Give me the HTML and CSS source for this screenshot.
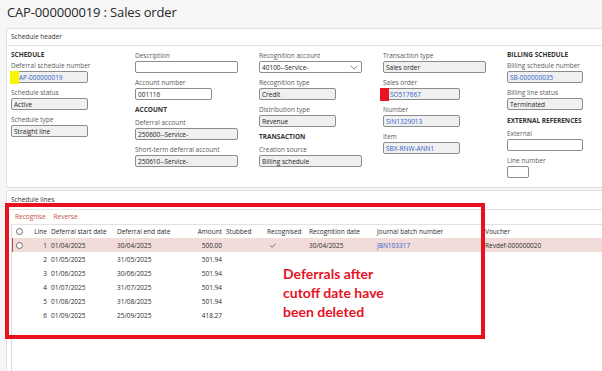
FILE: index.html
```html
<!DOCTYPE html>
<html lang="en">
<head>
<meta charset="utf-8">
<title>CAP-000000019 : Sales order</title>
<link rel="stylesheet" href="styles.css">
</head>
<body>
<div class="page">
  <h1 class="title">CAP-000000019 : Sales order</h1>

  <section class="card header-card">
    <div class="card-head">Schedule header</div>
    <div class="form-grid">
      <div class="col">
        <div class="group-title first">SCHEDULE</div>
        <div class="field"><div class="label">Deferral schedule number</div><div class="input ro w77 link"><span class="mark-yellow">C</span>AP-000000019</div></div>
        <div class="field"><div class="label">Schedule status</div><div class="input ro w77">Active</div></div>
        <div class="field"><div class="label">Schedule type</div><div class="input ro w77">Straight line</div></div>
      </div>

      <div class="col plain">
        <div class="field"><div class="label">Description</div><div class="input w103"></div></div>
        <div class="field"><div class="label">Account number</div><div class="input w77">001116</div></div>
        <div class="group-title">ACCOUNT</div>
        <div class="field"><div class="label">Deferral account</div><div class="input ro w103">250600--Service-</div></div>
        <div class="field"><div class="label">Short-term deferral account</div><div class="input ro w103">250610--Service-</div></div>
      </div>

      <div class="col plain">
        <div class="field"><div class="label">Recognition account</div><div class="input w103 select"><span>40100--Service-</span><svg width="8" height="5" viewBox="0 0 8 5"><polyline points="0.5,0.6 4,4.2 7.5,0.6" fill="none" stroke="#6a6a6a" stroke-width="0.8"/></svg></div></div>
        <div class="field"><div class="label">Recognition type</div><div class="input ro w77">Credit</div></div>
        <div class="field"><div class="label">Distribution type</div><div class="input ro w77">Revenue</div></div>
        <div class="group-title">TRANSACTION</div>
        <div class="field"><div class="label">Creation source</div><div class="input ro w103">Billing schedule</div></div>
      </div>

      <div class="col plain">
        <div class="field"><div class="label">Transaction type</div><div class="input ro w103">Sales order</div></div>
        <div class="field"><div class="label">Sales order</div><div class="input ro w77 link"><span class="mark-red"></span>SO517667</div></div>
        <div class="field"><div class="label">Number</div><div class="input ro w77 link">SIN1329013</div></div>
        <div class="field"><div class="label">Item</div><div class="input ro w77 link">SBX-RNW-ANN1</div></div>
      </div>

      <div class="col">
        <div class="group-title first">BILLING SCHEDULE</div>
        <div class="field"><div class="label">Billing schedule number</div><div class="input ro w76 link">SB-000000035</div></div>
        <div class="field"><div class="label">Billing line status</div><div class="input ro w76">Terminated</div></div>
        <div class="group-title ext">EXTERNAL REFERENCES</div>
        <div class="field"><div class="label">External</div><div class="input w76"></div></div>
        <div class="field"><div class="label">Line number</div><div class="input w22"></div></div>
      </div>
    </div>
  </section>

  <section class="card lines-card">
    <div class="card-head lines-head">Schedule lines</div>
    <div class="lines-body">
      <div class="actions"><span class="action">Recognise</span><span class="action">Reverse</span></div>
      <div class="grid">
        <div class="row head">
          <div class="cell radio-cell"><span class="radio"></span></div>
          <div class="cell num">Line</div>
          <div class="cell">Deferral start date</div>
          <div class="cell">Deferral end date</div>
          <div class="cell num">Amount</div>
          <div class="cell">Stubbed</div>
          <div class="cell">Recognised</div>
          <div class="cell">Recognition date</div>
          <div class="cell">Journal batch number</div>
          <div class="cell">Voucher</div>
        </div>
        <div class="row sel">
          <div class="cell radio-cell"><span class="radio"></span></div>
          <div class="cell num">1</div>
          <div class="cell">01/04/2025</div>
          <div class="cell">30/04/2025</div>
          <div class="cell num">500.00</div>
          <div class="cell"></div>
          <div class="cell check"><svg width="6" height="5" viewBox="0 0 6 5"><polyline points="0.5,2.6 2.2,4.2 5.5,0.8" fill="none" stroke="#555" stroke-width="0.8"/></svg></div>
          <div class="cell">30/04/2025</div>
          <div class="cell link">JBN103317</div>
          <div class="cell">Revdef-000000020</div>
        </div>
        <div class="row">
          <div class="cell radio-cell"></div>
          <div class="cell num">2</div>
          <div class="cell">01/05/2025</div>
          <div class="cell">31/05/2025</div>
          <div class="cell num">501.94</div>
          <div class="cell"></div><div class="cell"></div><div class="cell"></div><div class="cell"></div><div class="cell"></div>
        </div>
        <div class="row">
          <div class="cell radio-cell"></div>
          <div class="cell num">3</div>
          <div class="cell">01/06/2025</div>
          <div class="cell">30/06/2025</div>
          <div class="cell num">501.94</div>
          <div class="cell"></div><div class="cell"></div><div class="cell"></div><div class="cell"></div><div class="cell"></div>
        </div>
        <div class="row">
          <div class="cell radio-cell"></div>
          <div class="cell num">4</div>
          <div class="cell">01/07/2025</div>
          <div class="cell">31/07/2025</div>
          <div class="cell num">501.94</div>
          <div class="cell"></div><div class="cell"></div><div class="cell"></div><div class="cell"></div><div class="cell"></div>
        </div>
        <div class="row">
          <div class="cell radio-cell"></div>
          <div class="cell num">5</div>
          <div class="cell">01/08/2025</div>
          <div class="cell">31/08/2025</div>
          <div class="cell num">501.94</div>
          <div class="cell"></div><div class="cell"></div><div class="cell"></div><div class="cell"></div><div class="cell"></div>
        </div>
        <div class="row">
          <div class="cell radio-cell"></div>
          <div class="cell num">6</div>
          <div class="cell">01/09/2025</div>
          <div class="cell">25/09/2025</div>
          <div class="cell num">418.27</div>
          <div class="cell"></div><div class="cell"></div><div class="cell"></div><div class="cell"></div><div class="cell"></div>
        </div>
      </div>
    </div>
  </section>

  <div class="annotation">
    <p class="note">Deferrals after<br>cutoff date have<br>been deleted</p>
  </div>
</div>
</body>
</html>
```

FILE: styles.css
```css
* { box-sizing: border-box; }
html, body { margin: 0; padding: 0; }
body {
  background: #f6f6f6;
  font-family: "Open Sans", "Noto Sans", sans-serif;
  font-size: 6.5px;
  color: #262626;
  width: 602px;
  height: 371px;
  overflow: hidden;
}
.page { position: relative; height: 371px; overflow: hidden; }

.title {
  margin: 0;
  height: 28px;
  line-height: 24px;
  padding-left: 7px;
  font-size: 13px;
  letter-spacing: -0.15px;
  font-weight: 400;
  color: #262626;
}

.card {
  background: #fff;
  border: 1px solid #e0e0e0;
  border-right: none;
  border-radius: 4px 0 0 4px;
  margin-left: 6px;
}
.header-card { height: 160px; }
.card-head {
  height: 17px;
  line-height: 16px;
  padding-left: 4px;
  border-bottom: 1px solid #e2e2e2;
  color: #333;
}

.form-grid {
  display: grid;
  grid-template-columns: repeat(5, 124px);
  padding: 4px 0 0 4px;
}
.col.plain { padding-top: 1px; }

.group-title {
  height: 9px;
  line-height: 9px;
  font-weight: 700;
  color: #333;
  margin: 5px 0 4px;
}
.group-title.first { margin: 0 0 2px; }
.group-title.ext { margin-top: 6px; }

.field { margin-bottom: 5px; }
.label {
  height: 9px;
  line-height: 9px;
  margin-bottom: 1px;
  color: #5c5c5c;
  white-space: nowrap;
}
.input {
  display: flex;
  align-items: center;
  height: 12px;
  border: 1px solid #8c8c8c;
  border-radius: 2px;
  background: #fff;
  padding: 0 2px;
  color: #1e1e1e;
  white-space: nowrap;
  overflow: visible;
}
.input.ro { background: #f0f0f0; }
.input.link, .cell.link { color: #2f62c8; }
.w103 { width: 103px; }
.w77 { width: 77px; }
.w76 { width: 76px; }
.w22 { width: 22px; }
.input.select { justify-content: space-between; padding-right: 3px; }
.input.select svg { display: block; }

.mark-yellow {
  display: inline-block;
  width: 9px;
  height: 13px;
  margin-left: -4px;
  background: #f7f700;
  color: #f7f700;
}
.mark-red {
  display: inline-block;
  width: 9px;
  height: 13px;
  margin-left: -6px;
  margin-right: 1px;
  background: #e8141f;
}

.lines-card { margin-top: 2px; height: 200px; }
.lines-head { height: 19px; line-height: 18px; }
.lines-body { margin-left: 4px; }
.actions {
  display: flex;
  gap: 8px;
  height: 15px;
  line-height: 14px;
  padding-left: 4px;
  border-bottom: 1px solid #e2e2e2;
}
.action { color: #c4533c; }

.grid {
  border-left: 1px solid #dcdcdc;
  min-height: 160px;
}
.row {
  display: grid;
  grid-template-columns: 20px 17px 66px 65px 44px 41px 42px 68px 108px 1fr;
  height: 14px;
  align-items: center;
  color: #2b2b2b;
}
.row.head { height: 13px; }
.row.sel {
  background: #f2dcda;
  box-shadow: inset 1px 0 0 #b44a44;
}
.cell { padding: 0 2px; white-space: nowrap; }
.cell.num { text-align: right; }
.radio-cell { padding-left: 4px; display: flex; align-items: center; }
.radio {
  display: block;
  width: 7px;
  height: 7px;
  border: 1px solid #6b6b6b;
  border-radius: 50%;
  background: #fff;
}
.cell.check { padding-left: 5px; display: flex; align-items: center; }
.cell.check svg { display: block; }

.annotation {
  position: absolute;
  left: 5px;
  top: 203px;
  width: 480px;
  height: 136px;
  border: 4px solid #e8111f;
}
.note {
  position: absolute;
  left: 274px;
  top: 58px;
  margin: 0;
  font-family: Lato, "Open Sans", sans-serif;
  font-weight: 700;
  font-size: 14px;
  line-height: 18.8px;
  color: #e8111f;
}
```
